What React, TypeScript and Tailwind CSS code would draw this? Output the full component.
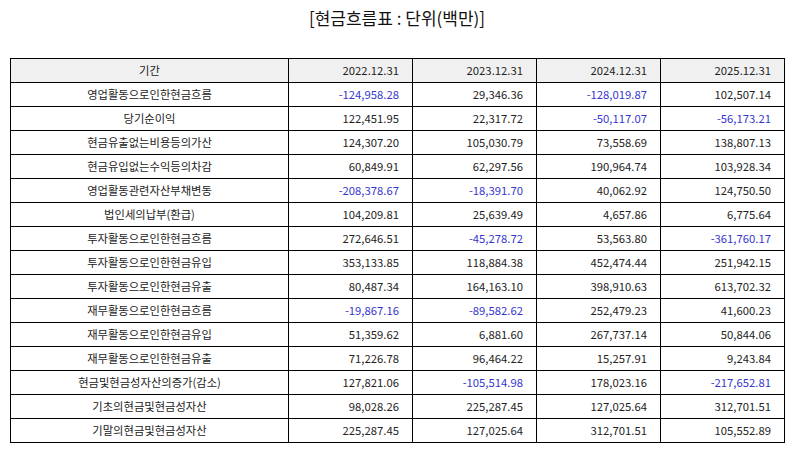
const years = ['2022.12.31', '2023.12.31', '2024.12.31', '2025.12.31'];

const rows: [string, string[]][] = [
  ['영업활동으로인한현금흐름', ['-124,958.28', '29,346.36', '-128,019.87', '102,507.14']],
  ['당기순이익', ['122,451.95', '22,317.72', '-50,117.07', '-56,173.21']],
  ['현금유출없는비용등의가산', ['124,307.20', '105,030.79', '73,558.69', '138,807.13']],
  ['현금유입없는수익등의차감', ['60,849.91', '62,297.56', '190,964.74', '103,928.34']],
  ['영업활동관련자산부채변동', ['-208,378.67', '-18,391.70', '40,062.92', '124,750.50']],
  ['법인세의납부(환급)', ['104,209.81', '25,639.49', '4,657.86', '6,775.64']],
  ['투자활동으로인한현금흐름', ['272,646.51', '-45,278.72', '53,563.80', '-361,760.17']],
  ['투자활동으로인한현금유입', ['353,133.85', '118,884.38', '452,474.44', '251,942.15']],
  ['투자활동으로인한현금유출', ['80,487.34', '164,163.10', '398,910.63', '613,702.32']],
  ['재무활동으로인한현금흐름', ['-19,867.16', '-89,582.62', '252,479.23', '41,600.23']],
  ['재무활동으로인한현금유입', ['51,359.62', '6,881.60', '267,737.14', '50,844.06']],
  ['재무활동으로인한현금유출', ['71,226.78', '96,464.22', '15,257.91', '9,243.84']],
  ['현금및현금성자산의증가(감소)', ['127,821.06', '-105,514.98', '178,023.16', '-217,652.81']],
  ['기초의현금및현금성자산', ['98,028.26', '225,287.45', '127,025.64', '312,701.51']],
  ['기말의현금및현금성자산', ['225,287.45', '127,025.64', '312,701.51', '105,552.89']],
];

export default function App() {
  return (
    <div className="w-[794px] h-[452px] bg-white text-[#222] font-['Noto_Sans_CJK_KR','Noto_Sans',sans-serif]">
      <h1 className="pt-[5px] h-[58px] text-center text-[17px] leading-[26px] text-[#111]">
        [현금흐름표 : 단위(백만)]
      </h1>
      <table className="ml-[10px] w-[774px] border-collapse table-fixed text-[11.3px] leading-none">
        <colgroup>
          <col className="w-[278px]" />
          <col className="w-[124px]" />
          <col className="w-[124px]" />
          <col className="w-[124px]" />
          <col className="w-[124px]" />
        </colgroup>
        <thead>
          <tr className="h-6 bg-[#f0f0f0]">
            <th className="border border-black font-normal text-center">기간</th>
            {years.map((y) => (
              <th key={y} className="border border-black font-normal text-right pr-[13px]">
                {y}
              </th>
            ))}
          </tr>
        </thead>
        <tbody>
          {rows.map(([label, vals]) => (
            <tr key={label} className="h-6">
              <td className="border border-black text-center">{label}</td>
              {vals.map((v, i) => (
                <td
                  key={i}
                  className={`border border-black text-right pr-[13px] ${
                    v.startsWith('-') ? 'text-[#3535d0]' : ''
                  }`}
                >
                  {v}
                </td>
              ))}
            </tr>
          ))}
        </tbody>
      </table>
    </div>
  );
}
